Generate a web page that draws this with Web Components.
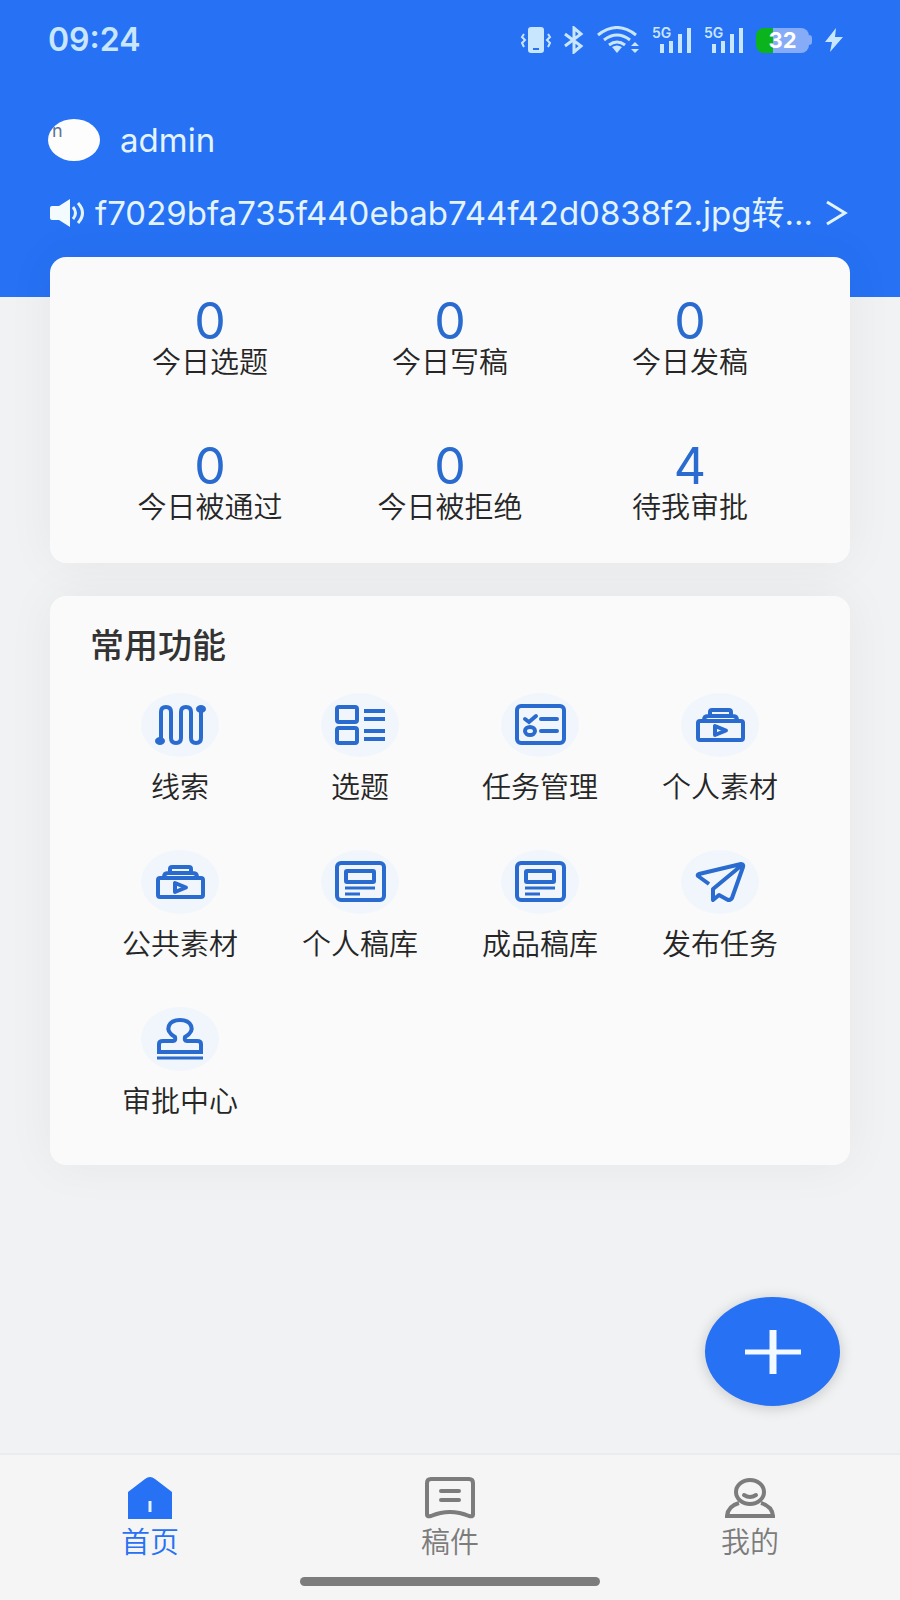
<!DOCTYPE html>
<html lang="zh-CN">
<head>
<meta charset="UTF-8">
<meta name="viewport" content="width=device-width, initial-scale=1">
<title>首页</title>
<style>
    :root {
        --brand: #2671f4;
        --icon: #2a6bd0;
        --card: #fafafa;
        --page: #f1f2f4;
        --ink: #262626;
        --muted: #7c7c7c;
        --on-brand: #e3f4ff;
    }

    body {
        margin: 0;
        background: var(--page);
        color: var(--ink);
        font-family: Inter, "Noto Sans CJK SC", sans-serif;
        font-size: 29px;
        font-weight: 350;
        line-height: 40px;
    }
</style>
</head>
<body>
<app-shell>
    <app-header slot="header" user="admin" notice="f7029bfa735f440ebab744f42d0838f2.jpg转...">
        <status-bar time="09:24" battery="32"></status-bar>
    </app-header>

    <stat-card>
        <stat-item value="0">今日选题</stat-item>
        <stat-item value="0">今日写稿</stat-item>
        <stat-item value="0">今日发稿</stat-item>
        <stat-item value="0">今日被通过</stat-item>
        <stat-item value="0">今日被拒绝</stat-item>
        <stat-item value="4">待我审批</stat-item>
    </stat-card>

    <feature-card heading="常用功能">
        <feature-link icon="clue">线索</feature-link>
        <feature-link icon="topic">选题</feature-link>
        <feature-link icon="task">任务管理</feature-link>
        <feature-link icon="media">个人素材</feature-link>
        <feature-link icon="media">公共素材</feature-link>
        <feature-link icon="draft">个人稿库</feature-link>
        <feature-link icon="draft">成品稿库</feature-link>
        <feature-link icon="send">发布任务</feature-link>
        <feature-link icon="stamp">审批中心</feature-link>
    </feature-card>

    <add-button slot="float"></add-button>

    <tab-bar slot="footer">
        <tab-item icon="home" active>首页</tab-item>
        <tab-item icon="article">稿件</tab-item>
        <tab-item icon="mine">我的</tab-item>
    </tab-bar>
</app-shell>

<script>
const FEATURE_ICONS = {
    clue: `
        <path d="M20 46V19q0-5 5-5t5 5V45q0 5 5 5t5-5V19q0-5 5-5t5 5V45q0 5 5 5t5-5V18"/>
        <ellipse cx="19" cy="48" rx="3" ry="2"/>
        <ellipse cx="60" cy="16" rx="3" ry="2"/>`,
    topic: `
        <rect x="16" y="14" width="20" height="15" rx="2"/>
        <rect x="16" y="35" width="20" height="15" rx="2"/>
        <path d="M43 18H64M43 26H64M43 38H64M43 46H64"/>`,
    task: `
        <rect x="16" y="13" width="47" height="37" rx="4"/>
        <path d="M24 26l4 3 7-6M40 26H56M40 38H56" stroke-linecap="round"/>
        <ellipse cx="29" cy="38" rx="5" ry="4"/>`,
    media: `
        <rect x="17" y="28" width="45" height="19" rx="2"/>
        <path d="M23 27q0-4 4-4H52q4 0 4 4M29 22V19q0-2 2-2H48q2 0 2 2V22"/>
        <path d="M34 33V42L45 37.500Z" stroke-linejoin="round"/>`,
    draft: `
        <rect x="16" y="13" width="47" height="37" rx="4"/>
        <rect x="25" y="21" width="28" height="11" rx="1"/>
        <path d="M24 38H54M24 44H39" stroke-width="3"/>`,
    send: `
        <path d="M28 34L17 26q-1-1 1-2L60 14q3 0 2 3L51 48q-1 2-4 2L38 45 32 50V39L61 15" stroke-linejoin="round"/>`,
    stamp: `
        <path d="M18 45V37q0-3 4-3H32q3 0 2-4C22 23 28 13 39 13S56 23 44 30q-1 4 2 4H56q4 0 4 3V45Z"/>
        <path d="M16 51H62" stroke-width="3"/>`
};

const TAB_ICONS = {
    home: `
        <path d="M3 15L20 2q5-4 10 0L47 15V42H3Z" fill="currentColor" stroke="none"/>
        <path d="M25 24V35" stroke="#e3f4ff" stroke-width="3"/>`,
    article: `
        <path d="M2 38V6q0-4 4-4H44q4 0 4 4V38q0 2-4 1Q25 31 6 39q-4 1-4-1Z"/>
        <path d="M16 14H34M16 23H34" stroke-linecap="round"/>`,
    mine: `
        <ellipse cx="25" cy="15" rx="14" ry="12"/>
        <path d="M19 18q6 4 12 0" stroke-linecap="round"/>
        <path d="M14 26Q3 29 2 39H48Q47 29 36 26"/>`
};

/**
 * AppShell: header, scrolling content, floating action and footer
 */
class AppShell extends HTMLElement {
    constructor() {
        super();
        this.attachShadow({ mode: 'open' });
    }

    connectedCallback() {
        this.shadowRoot.innerHTML = `
        <style>
            :host {
                display: flex;
                flex-direction: column;
                min-height: 100vh;
            }

            main {
                flex: 1;
                display: flex;
                flex-direction: column;
                gap: 33px;
                margin-top: -40px;
                padding: 0 50px 40px;
            }
        </style>
        <slot name="header"></slot>
        <main><slot></slot></main>
        <slot name="float"></slot>
        <slot name="footer"></slot>
        `;
    }
}
customElements.define('app-shell', AppShell);

class StatusBar extends HTMLElement {
    constructor() {
        super();
        this.attachShadow({ mode: 'open' });
    }

    connectedCallback() {
        const signal = `
            <svg width="40" height="40" viewBox="0 -6 40 40" fill="currentColor" role="img" aria-label="5G">
                <text x="0" y="12" font-size="14" font-weight="600">5G</text>
                <path d="M8 18h4v9H8zM17 15h4v12h-4zM26 8h4v19h-4zM35 2h4v25h-4z"/>
            </svg>`;
        this.shadowRoot.innerHTML = `
        <style>
            :host {
                display: flex;
                align-items: center;
                justify-content: space-between;
                height: 80px;
                color: #c9e6ff;
            }

            time {
                font-size: 32px;
                font-weight: 600;
            }

            .icons {
                display: flex;
                align-items: center;
                gap: 12px;
                padding-right: 4px;
            }

            svg {
                display: block;
            }

            .battery {
                display: flex;
                align-items: center;
            }

            .level {
                width: 53px;
                border-radius: 8px;
                background: linear-gradient(90deg, #0bb41c 32%, #86abf7 32%);
                color: #fff;
                font-size: 22px;
                font-weight: 700;
                line-height: 25px;
                text-align: center;
            }

            .cap {
                width: 3px;
                height: 10px;
                border-radius: 0 3px 3px 0;
                background: #86abf7;
            }
        </style>
        <time>${this.getAttribute('time')}</time>
        <div class="icons">
            <svg width="32" height="28" viewBox="0 0 32 28" fill="currentColor">
                <rect x="8" y="1" width="16" height="26" rx="3"/>
                <path d="M13 23h6" stroke="#2671f4" stroke-width="2"/>
                <path d="M4 8l-2 3 3 3-3 3 2 4M28 8l2 3-3 3 3 3-2 4" fill="none" stroke="currentColor" stroke-width="2"/>
            </svg>
            <svg width="20" height="28" viewBox="0 0 20 28" fill="none" stroke="currentColor" stroke-width="3">
                <path d="M1 8l16 12-7 6V2l7 6L1 20"/>
            </svg>
            <svg width="44" height="28" viewBox="0 0 44 28" fill="none" stroke="currentColor" stroke-width="3">
                <path d="M2 9Q21-6 40 9M8 14q13-10 26 0M13 19q8-6 16 0"/>
                <path d="M16 21q5-3 10 0l-5 6z" fill="currentColor" stroke="none"/>
                <path d="M35 20l4-4 4 4zM35 23l4 4 4-4z" fill="currentColor" stroke="none"/>
            </svg>
            ${signal}
            ${signal}
            <div class="battery"><span class="level">${this.getAttribute('battery')}</span><span class="cap"></span></div>
            <svg width="20" height="28" viewBox="0 0 20 28" fill="currentColor">
                <path d="M12 2L1 16h7L6 26 19 11h-8z"/>
            </svg>
        </div>
        `;
    }
}
customElements.define('status-bar', StatusBar);

class AppHeader extends HTMLElement {
    constructor() {
        super();
        this.attachShadow({ mode: 'open' });
    }

    connectedCallback() {
        const user = this.getAttribute('user');
        this.shadowRoot.innerHTML = `
        <style>
            :host {
                display: block;
                padding: 0 52px 64px 48px;
                background: var(--brand);
                color: var(--on-brand);
                font-size: 33px;
                font-weight: 400;
            }

            .user {
                display: flex;
                align-items: center;
                gap: 20px;
                height: 42px;
                margin-top: 39px;
            }

            .avatar {
                width: 52px;
                height: 42px;
                border-radius: 50%;
                overflow: hidden;
                background: #fdfdfd;
                color: #5d7391;
                font-size: 18px;
                line-height: 24px;
                text-indent: 4px;
            }

            .notice {
                display: flex;
                align-items: center;
                gap: 8px;
                height: 40px;
                margin-top: 32px;
                color: inherit;
                text-decoration: none;
            }

            .notice span {
                flex: 1;
                min-width: 0;
                overflow: hidden;
                white-space: nowrap;
            }

            svg {
                flex: none;
            }
        </style>
        <slot></slot>
        <div class="user">
            <div class="avatar">n</div>
            <div>${user}</div>
        </div>
        <a class="notice" href="#notice">
            <svg width="39" height="30" viewBox="0 0 39 30" fill="none" stroke="currentColor" stroke-width="3">
                <path d="M2 10q0-2 2-2h7L22 1v28L11 22H4q-2 0-2-2z" fill="#f4fbff" stroke="none"/>
                <path d="M25 9q5 6 0 12M30 5q9 10 0 20"/>
            </svg>
            <span>${this.getAttribute('notice')}</span>
            <svg width="24" height="26" viewBox="0 0 24 26" fill="none" stroke="currentColor" stroke-width="3">
                <path d="M3 2l18 11L3 24"/>
            </svg>
        </a>
        `;
    }
}
customElements.define('app-header', AppHeader);

class StatCard extends HTMLElement {
    constructor() {
        super();
        this.attachShadow({ mode: 'open' });
    }

    connectedCallback() {
        this.shadowRoot.innerHTML = `
        <style>
            :host {
                display: grid;
                grid-template-columns: repeat(3, 1fr);
                row-gap: 61px;
                padding: 40px 40px 37px;
                border-radius: 16px;
                background: var(--card);
                box-shadow: 0 0 50px rgba(0, 0, 0, 0.05);
            }
        </style>
        <slot></slot>
        `;
    }
}
customElements.define('stat-card', StatCard);

class StatItem extends HTMLElement {
    constructor() {
        super();
        this.attachShadow({ mode: 'open' });
    }

    connectedCallback() {
        this.shadowRoot.innerHTML = `
        <style>
            :host {
                display: flex;
                flex-direction: column;
                align-items: center;
                white-space: nowrap;
            }

            .value {
                color: var(--icon);
                font-size: 50px;
                font-weight: 400;
                line-height: 48px;
            }

            .label {
                line-height: 36px;
            }
        </style>
        <div class="value">${this.getAttribute('value')}</div>
        <div class="label"><slot></slot></div>
        `;
    }
}
customElements.define('stat-item', StatItem);

class FeatureCard extends HTMLElement {
    constructor() {
        super();
        this.attachShadow({ mode: 'open' });
    }

    connectedCallback() {
        this.shadowRoot.innerHTML = `
        <style>
            :host {
                display: block;
                padding: 30px 40px 43px;
                border-radius: 16px;
                background: var(--card);
                box-shadow: 0 0 50px rgba(0, 0, 0, 0.05);
            }

            h2 {
                margin: 0 0 27px;
                font-size: 34px;
                font-weight: 500;
                line-height: 40px;
                color: #333;
            }

            .grid {
                display: grid;
                grid-template-columns: repeat(4, 1fr);
                row-gap: 42px;
            }
        </style>
        <h2>${this.getAttribute('heading')}</h2>
        <div class="grid"><slot></slot></div>
        `;
    }
}
customElements.define('feature-card', FeatureCard);

class FeatureLink extends HTMLElement {
    constructor() {
        super();
        this.attachShadow({ mode: 'open' });
    }

    connectedCallback() {
        const icon = this.getAttribute('icon');
        this.shadowRoot.innerHTML = `
        <style>
            :host {
                display: block;
            }

            a {
                display: flex;
                flex-direction: column;
                align-items: center;
                gap: 11px;
                color: inherit;
                text-decoration: none;
                white-space: nowrap;
            }

            svg {
                display: block;
                border-radius: 50%;
                background: #f1f6fc;
            }
        </style>
        <a href="#${icon}">
            <svg width="78" height="64" viewBox="0 0 78 64" fill="none" stroke="#2a6bd0" stroke-width="4">${FEATURE_ICONS[icon]}</svg>
            <span><slot></slot></span>
        </a>
        `;
    }
}
customElements.define('feature-link', FeatureLink);

class AddButton extends HTMLElement {
    constructor() {
        super();
        this.attachShadow({ mode: 'open' });
    }

    connectedCallback() {
        this.shadowRoot.innerHTML = `
        <style>
            :host {
                position: fixed;
                right: 60px;
                bottom: 194px;
            }

            button {
                display: flex;
                align-items: center;
                justify-content: center;
                width: 135px;
                height: 109px;
                padding: 0;
                border: 0;
                border-radius: 50%;
                background: var(--brand);
                box-shadow: 0 2px 14px rgba(0, 0, 0, 0.18);
            }
        </style>
        <button type="button" aria-label="新建">
            <svg width="56" height="46" viewBox="0 0 56 46" stroke="#f2faff">
                <path d="M0 23H56" stroke-width="5"/>
                <path d="M28 1V45" stroke-width="7"/>
            </svg>
        </button>
        `;
    }
}
customElements.define('add-button', AddButton);

class TabBar extends HTMLElement {
    constructor() {
        super();
        this.attachShadow({ mode: 'open' });
    }

    connectedCallback() {
        this.shadowRoot.innerHTML = `
        <style>
            :host {
                display: block;
                padding: 22px 0 14px;
                border-top: 2px solid #ebecef;
                background: #f5f5f5;
            }

            nav {
                display: grid;
                grid-template-columns: repeat(3, 1fr);
            }

            .indicator {
                width: 300px;
                height: 9px;
                margin: 14px auto 0;
                border-radius: 5px;
                background: var(--muted);
            }
        </style>
        <nav><slot></slot></nav>
        <div class="indicator"></div>
        `;
    }
}
customElements.define('tab-bar', TabBar);

class TabItem extends HTMLElement {
    constructor() {
        super();
        this.attachShadow({ mode: 'open' });
    }

    connectedCallback() {
        const icon = this.getAttribute('icon');
        const active = this.hasAttribute('active');
        this.shadowRoot.innerHTML = `
        <style>
            :host {
                display: block;
            }

            a {
                display: flex;
                flex-direction: column;
                align-items: center;
                gap: 4px;
                color: ${active ? 'var(--brand)' : 'var(--muted)'};
                text-decoration: none;
            }

            svg {
                display: block;
            }
        </style>
        <a href="#${icon}"${active ? ' aria-current="page"' : ''}>
            <svg width="50" height="42" viewBox="0 0 50 42" fill="none" stroke="currentColor" stroke-width="4">${TAB_ICONS[icon]}</svg>
            <span><slot></slot></span>
        </a>
        `;
    }
}
customElements.define('tab-item', TabItem);
</script>
</body>
</html>
